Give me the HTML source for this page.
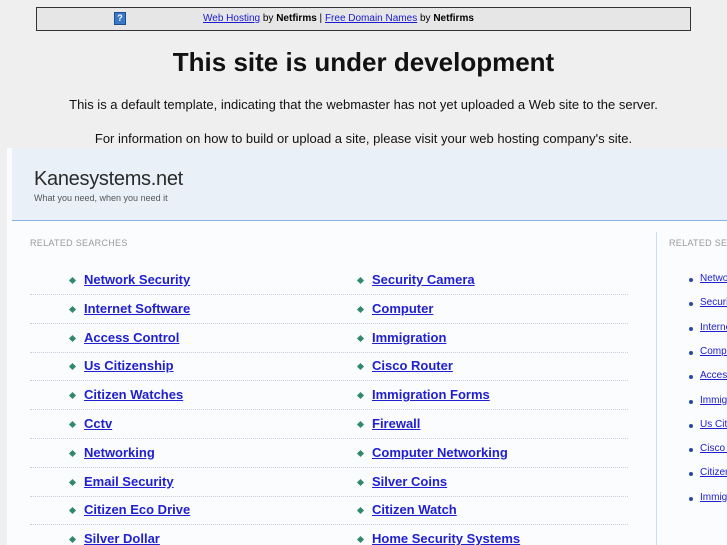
<!DOCTYPE html>
<html><head><meta charset="utf-8"><style>
*{margin:0;padding:0;box-sizing:border-box}
html,body{width:727px;height:545px;overflow:hidden;background:#efefef;font-family:"Liberation Sans",sans-serif;position:relative}
.bar{position:absolute;left:36px;top:7px;width:655px;height:24px;border:1px solid #333;background:#e6e6e6;font-size:10px;color:#000}
.bar .q{position:absolute;left:77px;top:4px;width:12px;height:13px;background:#3a78c8;border:1px solid #1c4e8c;color:#fff;font-size:9px;font-weight:bold;text-align:center;line-height:11px}
.bar .t{position:absolute;left:166px;top:5px}
.bar a{color:#1a1ad0;text-decoration:underline}
h1{position:absolute;top:47px;left:0;width:727px;text-align:center;font-size:26px;font-weight:bold;color:#111}
.p{position:absolute;left:0;width:727px;text-align:center;font-size:13px;color:#111}
.panel{position:absolute;left:7px;top:148px;width:720px;height:397px;background:#fbfcfe;overflow:hidden}
.hdr{position:absolute;left:5px;top:0;width:715px;height:73px;background:#eaf0f8;border-bottom:1px solid #8eaee8}
.title{position:absolute;left:22px;top:20px;font-size:20px;color:#2a2a2a;letter-spacing:-0.3px}
.tag{position:absolute;left:22px;top:45px;font-size:9px;color:#555}
.lbl{position:absolute;top:90px;font-size:9px;color:#9a9a9a;letter-spacing:0.3px;white-space:nowrap}
.vline{position:absolute;left:649px;top:84px;width:1px;height:319px;background:#cfdcef}
.row{position:absolute;left:23px;width:598px;height:29px;border-bottom:1px dotted #ccd}
.it{position:absolute;font-size:13px;font-weight:bold;color:#2020d0;text-decoration:underline;white-space:nowrap}
.b{position:absolute;width:5px;height:5px;background:#2e8a6a;transform:rotate(45deg)}
.r{position:absolute;font-size:10px;color:#2020d0;text-decoration:underline;white-space:nowrap}
.rb{position:absolute;width:4px;height:4px;border-radius:2px;background:#2a4aa0}
#rows{position:absolute;left:0;top:0;width:727px;height:545px;overflow:hidden}
</style></head><body>
<div class="bar"><div class="q">?</div><div class="t"><a>Web Hosting</a> by <b>Netfirms</b> | <a>Free Domain Names</a> by <b>Netfirms</b></div></div>
<h1>This site is under development</h1>
<div class="p" style="top:97px">This is a default template, indicating that the webmaster has not yet uploaded a Web site to the server.</div>
<div class="p" style="top:131px">For information on how to build or upload a site, please visit your web hosting company's site.</div>
<div class="panel">
<div class="hdr"><div class="title">Kanesystems.net</div><div class="tag">What you need, when you need it</div></div>
<div class="lbl" style="left:23px">RELATED SEARCHES</div>
<div class="vline"></div>
<div class="lbl" style="left:662px">RELATED SEARCHES</div>
</div>
<div id="rows"></div>
<script>
var L=["Network Security","Internet Software","Access Control","Us Citizenship","Citizen Watches","Cctv","Networking","Email Security","Citizen Eco Drive","Silver Dollar"];
var R=["Security Camera","Computer","Immigration","Cisco Router","Immigration Forms","Firewall","Computer Networking","Silver Coins","Citizen Watch","Home Security Systems"];
var S=["Network Security","Security Camera","Internet Software","Computer","Access Control","Immigration","Us Citizenship","Cisco Router","Citizen Watches","Immigration Forms"];
var h="";
for(var i=0;i<10;i++){var y=272+i*28.8;
h+='<div class="row" style="top:'+(y-6)+'px;left:30px"></div>';
h+='<div class="b" style="left:70px;top:'+(y+6)+'px"></div><div class="it" style="left:84px;top:'+y+'px">'+L[i]+'</div>';
h+='<div class="b" style="left:358px;top:'+(y+6)+'px"></div><div class="it" style="left:372px;top:'+y+'px">'+R[i]+'</div>';
var y2=273+i*24.3;
h+='<div class="rb" style="left:689px;top:'+(y2+5)+'px"></div><div class="r" style="left:700px;top:'+y2+'px">'+S[i]+'</div>';}
document.getElementById("rows").innerHTML=h;
</script>
</body></html>
